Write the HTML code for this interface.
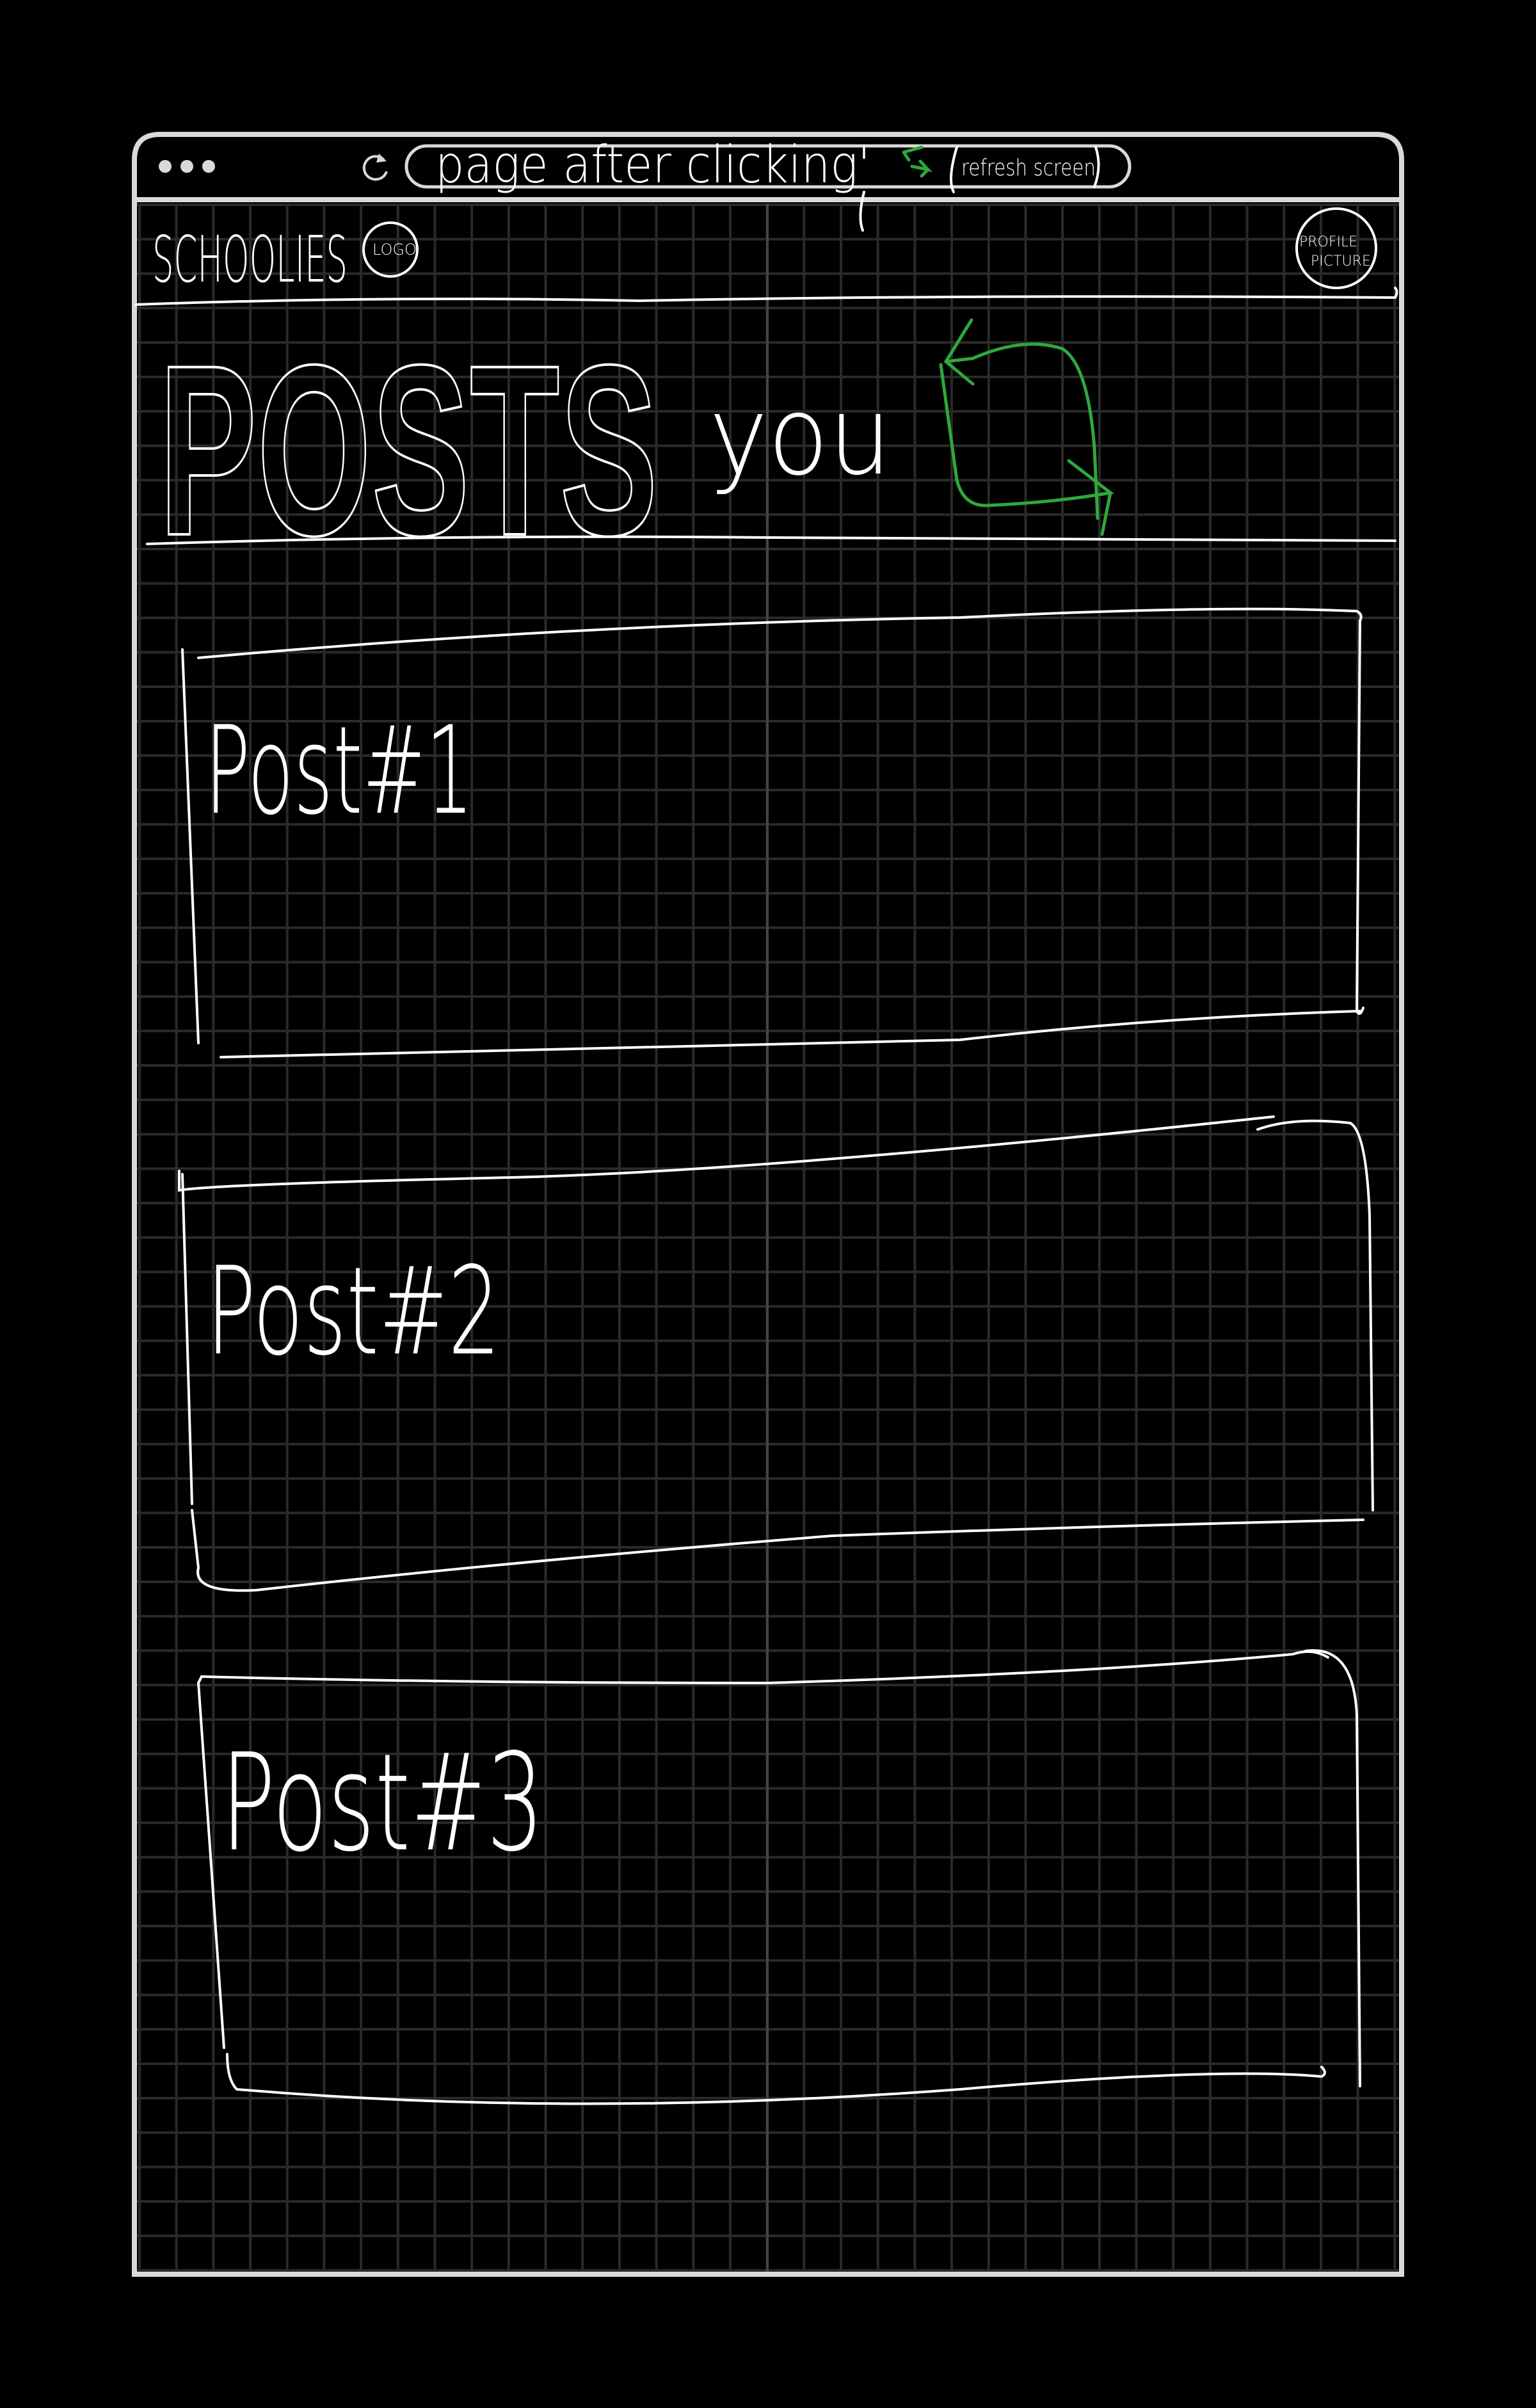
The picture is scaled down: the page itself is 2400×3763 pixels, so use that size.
<!DOCTYPE html>
<html><head><meta charset="utf-8"><style>
html,body{margin:0;padding:0;background:#000;width:2400px;height:3763px;overflow:hidden}
.grid{position:absolute;left:212px;top:318px;width:1976px;height:3232px;
background-image:linear-gradient(to right,#2a2a2a 0,#2a2a2a 4px,transparent 4px),linear-gradient(to bottom,#2a2a2a 0,#2a2a2a 4px,transparent 4px);
background-size:57.7px 53.8px;background-position:4px 0px}
svg{position:absolute;left:0;top:0}
text{font-family:"DejaVu Sans ExtraLight","DejaVu Sans","Liberation Sans",sans-serif;font-weight:200}
</style></head><body>
<div class="grid"></div>
<svg width="2400" height="3763" viewBox="0 0 2400 3763">
<line x1="1199" y1="318" x2="1199" y2="3550" stroke="#444" stroke-width="4"/>
<path d="M210 3554 L210 250 Q210 210 250 210 L2150 210 Q2190 210 2190 250 L2190 3554 Z" fill="none" stroke="#d9d9d9" stroke-width="8"/>
<line x1="210" y1="312" x2="2190" y2="312" stroke="#d9d9d9" stroke-width="8"/>
<circle cx="258" cy="260" r="10" fill="#d9d9d9"/><circle cx="292" cy="260" r="10" fill="#d9d9d9"/><circle cx="326" cy="260" r="10" fill="#d9d9d9"/>
<path d="M600 250 A18 18 0 1 0 604 268" fill="none" stroke="#d9d9d9" stroke-width="4"/>
<path d="M592 240 L604 252 L588 254 Z" fill="#d9d9d9"/>
<rect x="635" y="228" width="1130" height="64" rx="32" fill="none" stroke="#d9d9d9" stroke-width="5"/>
<g fill="none" stroke="#fff" stroke-width="4" stroke-linecap="round">
<text x="680" y="285" font-size="80" fill="#fff" stroke="none" textLength="680" lengthAdjust="spacingAndGlyphs">page after clicking'</text>
<path d="M1350 300 Q1340 340 1348 360"/>
<path d="M1495 230 Q1480 280 1490 300"/>
<text x="1502" y="274" font-size="36" fill="#fff" stroke="none" textLength="210" lengthAdjust="spacingAndGlyphs">refresh screen</text>
<path d="M1712 230 Q1722 260 1710 292"/>
<text x="238" y="440" font-size="100" fill="#fff" stroke="none" textLength="305" lengthAdjust="spacingAndGlyphs">SCHOOLIES</text>
<circle cx="610" cy="390" r="42"/>
<text x="582" y="398" font-size="24" fill="#fff" stroke="none">LOGO</text>
<circle cx="2088" cy="388" r="62"/>
<text x="2030" y="385" font-size="22" fill="#fff" stroke="none">PROFILE</text>
<text x="2048" y="415" font-size="22" fill="#fff" stroke="none">PICTURE</text>
<path d="M212 476 Q600 462 1000 470 Q1500 460 2180 465 Q2185 455 2180 450"/>
<text x="248" y="835" font-size="380" font-weight="bold" fill="none" stroke="#fff" stroke-width="4" textLength="780" lengthAdjust="spacingAndGlyphs" style="font-family:'Liberation Sans',sans-serif;font-weight:bold">POSTS</text>
<text x="1108" y="740" font-size="170" fill="#fff" stroke="none" textLength="285" lengthAdjust="spacingAndGlyphs">you</text>
<path d="M230 850 Q700 835 1200 840 Q1700 842 2180 845"/>
<path d="M310 1028 Q900 975 1500 965 Q1900 945 2120 955 Q2130 960 2125 970 L2120 1580 Q2125 1590 2130 1575 M2125 1580 Q1800 1590 1500 1625 Q900 1640 345 1652 M285 1015 L310 1630"/>
<text x="320" y="1270" font-size="190" fill="#fff" stroke="none" textLength="420" lengthAdjust="spacingAndGlyphs">Post#1</text>
<path d="M280 1830 L280 1860 Q350 1850 800 1840 Q1200 1830 1990 1745 M1965 1765 Q2020 1745 2110 1755 Q2135 1770 2140 1900 L2145 2360 M2130 2375 Q1700 2385 1300 2400 Q800 2440 400 2485 Q300 2490 310 2450 L300 2360 M285 1835 L300 2350"/>
<text x="322" y="2115" font-size="190" fill="#fff" stroke="none" textLength="460" lengthAdjust="spacingAndGlyphs">Post#2</text>
<path d="M310 2630 L315 2620 Q700 2630 1200 2630 Q1700 2615 2020 2585 Q2050 2575 2075 2590 M2040 2580 Q2115 2570 2120 2680 L2125 3260 M2065 3230 Q2075 3240 2065 3245 Q1900 3230 1500 3265 Q900 3310 370 3265 Q355 3250 355 3210 M310 2630 L350 3200"/>
<text x="345" y="2890" font-size="210" fill="#fff" stroke="none" textLength="505" lengthAdjust="spacingAndGlyphs">Post#3</text>
</g>
<g fill="none" stroke="#2ea83c" stroke-width="5" stroke-linecap="round">
<path d="M1518 500 L1478 565 L1520 600 M1478 565 L1520 560 Q1600 525 1660 545 Q1700 570 1710 700 L1715 810"/>
<path d="M1470 570 L1495 750 Q1505 790 1540 790 Q1650 785 1735 770 L1670 720 M1735 770 L1722 835"/>
<path d="M1412 238 L1440 230 M1412 238 L1420 250 M1425 260 L1450 265 L1438 252 M1450 265 L1440 275"/>
</g>
</svg>
</body></html>
